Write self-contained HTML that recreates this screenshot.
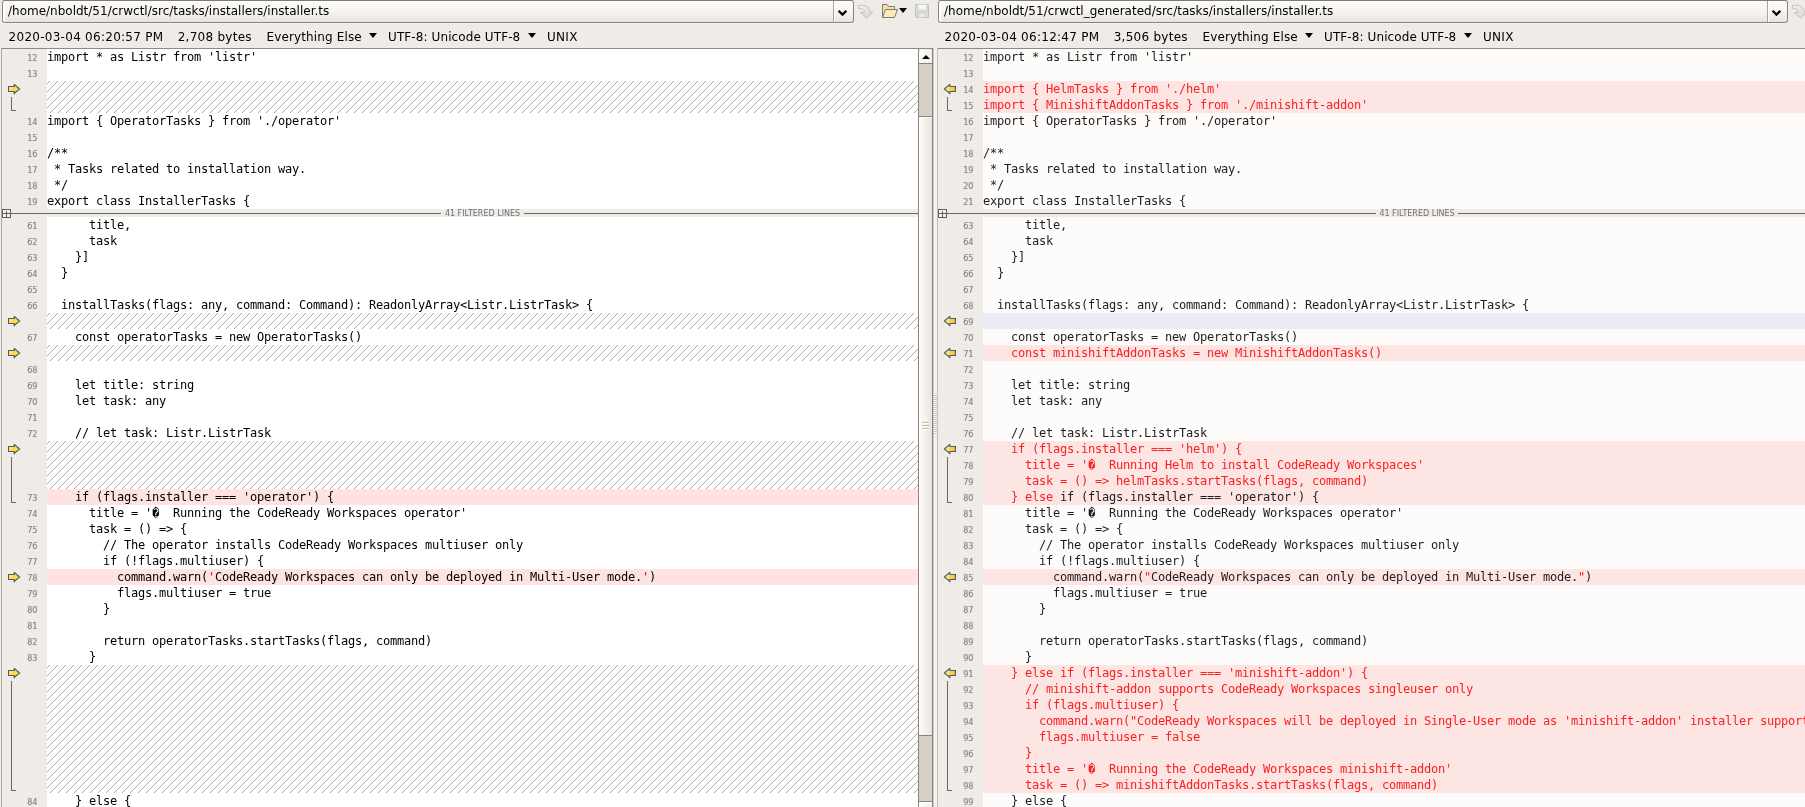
<!DOCTYPE html>
<html lang="en"><head><meta charset="utf-8"><title>installer.ts - Text Compare</title>
<style>
*{box-sizing:border-box;margin:0;padding:0}
html,body{width:1805px;height:807px;overflow:hidden;background:#efebe7}
body{font-family:"DejaVu Sans","Liberation Sans",sans-serif;font-size:12px;color:#000;position:relative}
#app{will-change:transform;position:absolute;left:0;top:0;width:1805px;height:807px;overflow:hidden;background:#efebe7}
.cb{position:absolute;top:0;height:23px;border:1px solid #8d857b;border-top-color:#7f7972;border-radius:3px;background:linear-gradient(#fcfbfa 0%,#f7f5f2 45%,#efece8 80%,#e6e2dd 100%);box-shadow:inset 1px 1px 0 #fff,inset 2px 0 0 #fff,0 1px 0 #f6f4f1}
.cb .tx{position:absolute;left:5px;top:2px;line-height:16px;white-space:nowrap;font-size:12px}
.cb .btn{position:absolute;right:0;top:0;bottom:0;width:20px;border-left:1px solid #a9a39b;box-shadow:inset 1px 0 0 #fff}
.cb .btn svg{position:absolute;left:3px;top:8px}
.info{position:absolute;top:25px;height:24px;line-height:24px;white-space:nowrap;font-size:12px}
.info span{position:absolute;top:0}
.tri{position:absolute;width:0;height:0;border-left:4.5px solid transparent;border-right:4.5px solid transparent;border-top:5px solid #000}
.pane{position:absolute;top:48px;height:759px;overflow:hidden}
.gut{position:absolute;left:0;top:0;bottom:0;background:#efebe7}
.r{position:absolute;left:0;right:0;height:16px;line-height:16px;white-space:pre}
.r .n{position:absolute;left:0;top:1px;text-align:right;font-family:"DejaVu Sans Condensed","DejaVu Sans",sans-serif;font-size:9px;color:#888;-webkit-text-stroke:0.18px #888;line-height:16px;padding-right:0}
.r code{position:absolute;top:0;height:16px;right:0;font-family:"DejaVu Sans Mono","Liberation Mono",monospace;font-size:12px;letter-spacing:-0.2246px;line-height:16px;white-space:pre;color:#000;overflow:hidden}
.r.p code{background:#ffe3e3}
.r.b code{background:#e8e8f8}
.r .r,.r span.r{color:#ff0000}
code span.r{position:static;color:#f00}
.fb{position:absolute;left:0;right:0;height:8px;background:#efebe7}
.fb .ln{position:absolute;left:2px;right:0;top:4px;height:1px;background:#6a6a6a}
.fb .pl{position:absolute;left:0;top:0;width:9px;height:9px;border:1px solid #5f5f5f;background:#f3f2f0;z-index:2}
.fb .pl:before{content:"";position:absolute;left:3px;top:1px;width:1px;height:6px;background:#5f5f5f}
.fb .pl:after{content:"";position:absolute;left:0;top:3px;width:7px;height:1px;background:#5f5f5f}
.fb .ft{position:absolute;top:0;height:8px;line-height:10.4px;overflow:hidden;text-align:center;font-size:8px;color:#727272}
.fb .ft b{font-weight:normal;background:#efebe7;padding:0 3.5px;position:relative;display:inline-block;height:8px;vertical-align:top}
.ar{position:absolute}
.bk{position:absolute;width:5px;border-left:1px solid #686868;border-bottom:1px solid #686868}

/* left pane */
#lp{left:1px;width:932px;border-left:1px solid #adaaa6;border-top:1px solid #8f8a83}
#lp .gut{width:45px}
#lp .r .n{width:35.5px}
#lp .r code{left:45px;right:15px}
#lp .fb .ft{left:45px;right:15px}
#lp .ar{left:6px}
#lp .bk{left:9px}
#lhatch{position:absolute;left:45px;top:0}
/* right pane */
#rp{left:937px;width:868px;border-left:1px solid #c2c0bd;border-top:1px solid #8f8a83}
#rp .gut{left:1px;width:44px;}
#rp .r .n{width:34.5px;left:1px}
#rp .r code{left:45px;right:0}
#rp .r code{background:#fdfcfb;color:#1f1e1e}
#rp .r.p code{background:#fde5e4}
#rp .r.b code{background:#ececf9}
#rp code span.r{color:#fd2020}
#rp .fb .ft{left:45px;width:868px}
#rp .ar{left:5px}
#rp .bk{left:9px}
#rp .code-bg{position:absolute;left:45px;top:0;right:0;bottom:0;background:#fdfcfb}
</style></head>
<body>
<div id="app">
<svg width="0" height="0" style="position:absolute">
<defs>
<pattern id="hp" width="8" height="8" patternUnits="userSpaceOnUse" x="3" y="0">
<g fill="#a8a8a8" shape-rendering="crispEdges">
<rect x="0" y="7" width="1" height="1"/><rect x="1" y="6" width="1" height="1"/><rect x="2" y="5" width="1" height="1"/><rect x="3" y="4" width="1" height="1"/><rect x="4" y="3" width="1" height="1"/><rect x="5" y="2" width="1" height="1"/><rect x="6" y="1" width="1" height="1"/><rect x="7" y="0" width="1" height="1"/>
</g>
</pattern>
<linearGradient id="ag" x1="0" y1="0" x2="1" y2="0.35"><stop offset="0" stop-color="#fff57e"/><stop offset="0.6" stop-color="#f7d558"/><stop offset="1" stop-color="#ffd43c"/></linearGradient>
<linearGradient id="gg" x1="0" y1="0" x2="1" y2="1"><stop offset="0" stop-color="#f2f2f2"/><stop offset="1" stop-color="#d6d6d6"/></linearGradient>
<linearGradient id="ag2" x1="0" y1="0" x2="1" y2="0.35"><stop offset="0" stop-color="#fff9a8"/><stop offset="0.5" stop-color="#f9dc68"/><stop offset="1" stop-color="#efc13c"/></linearGradient>
</defs>
</svg>

<!-- left path bar -->
<div class="cb" style="left:2px;width:852px"><span class="tx">/home/nboldt/51/crwctl/src/tasks/installers/installer.ts</span><span class="btn"><svg width="11" height="8" viewBox="0 0 11 8"><polygon points="0.8,2.6 2.5,0.9 5.5,3.9 8.5,0.9 10.2,2.6 5.5,7.3" fill="#000"/></svg></span></div>

<!-- toolbar icons -->
<svg style="position:absolute;left:857px;top:4px" width="18" height="16" viewBox="0 0 18 16"><path d="M1.5 1.5C7 0.6 13 2 13.5 8.5H15.8L9.5 13.8L3.2 8.5H7.5C7.5 5.6 5 4.2 1.5 4.5Z" fill="url(#gg)" stroke="#c2c2c2" stroke-width="1" stroke-linejoin="round"/></svg>
<svg style="position:absolute;left:881px;top:3px" width="18" height="16" viewBox="0 0 18 16"><path d="M1.5 14.5V1.5H6L7.5 3.5H13.5V6.5" fill="#f7dfa0" stroke="#7b7b7b" stroke-width="1" stroke-linejoin="round"/><path d="M1.5 14.5L4.5 6.5H16.5L13.5 14.5Z" fill="#fce9b6" stroke="#7b7b7b" stroke-width="1" stroke-linejoin="round"/></svg>
<i class="tri" style="left:898.7px;top:8px;border-left-width:4.9px;border-right-width:4.9px;border-top-width:5.3px"></i>
<svg style="position:absolute;left:914px;top:3px" width="16" height="16" viewBox="0 0 16 16"><path d="M1.5 1.5H14.5V14.5H2.5L1.5 13.5Z" fill="#d9d9d9" stroke="#c3c3c3" stroke-width="1"/><rect x="4" y="1.5" width="8.5" height="5.5" fill="#f6f6f6" stroke="#cdcdcd" stroke-width="0.6"/><rect x="4.5" y="10" width="7" height="4.5" fill="#e8e8e8" stroke="#c6c6c6" stroke-width="0.6"/></svg>
<svg style="position:absolute;left:1791px;top:4px" width="18" height="16" viewBox="0 0 18 16"><path d="M1.5 1.5C7 0.6 13 2 13.5 8.5H15.8L9.5 13.8L3.2 8.5H7.5C7.5 5.6 5 4.2 1.5 4.5Z" fill="url(#gg)" stroke="#c2c2c2" stroke-width="1" stroke-linejoin="round"/></svg>

<!-- right path bar -->
<div class="cb" style="left:938px;width:850px"><span class="tx">/home/nboldt/51/crwctl_generated/src/tasks/installers/installer.ts</span><span class="btn"><svg width="11" height="8" viewBox="0 0 11 8"><polygon points="0.8,2.6 2.5,0.9 5.5,3.9 8.5,0.9 10.2,2.6 5.5,7.3" fill="#000"/></svg></span></div>

<!-- info rows -->
<div class="info" style="left:0px;width:936px">
<span style="left:8.6px;letter-spacing:0.27px">2020-03-04 06:20:57 PM</span><span style="left:177.7px;letter-spacing:0.27px">2,708 bytes</span><span style="left:266.5px;letter-spacing:0.13px">Everything Else</span><i class="tri" style="left:369px;top:8px"></i><span style="left:388px;letter-spacing:0.1px">UTF-8: Unicode UTF-8</span><i class="tri" style="left:528px;top:8px"></i><span style="left:547px;letter-spacing:0.3px">UNIX</span>
</div>
<div class="info" style="left:936px;width:869px">
<span style="left:8.6px;letter-spacing:0.27px">2020-03-04 06:12:47 PM</span><span style="left:177.7px;letter-spacing:0.27px">3,506 bytes</span><span style="left:266.5px;letter-spacing:0.13px">Everything Else</span><i class="tri" style="left:369px;top:8px"></i><span style="left:388px;letter-spacing:0.1px">UTF-8: Unicode UTF-8</span><i class="tri" style="left:528px;top:8px"></i><span style="left:547px;letter-spacing:0.3px">UNIX</span>
</div>

<!-- left pane -->
<div class="pane" id="lp">
<div class="gut"></div>
<div style="position:absolute;left:45px;top:0;bottom:0;width:871px;background:#fff"></div>
<svg id="lhatch" width="871" height="759" viewBox="0 0 871 759"><rect x="0" y="32" width="871" height="32" fill="url(#hp)"/><rect x="0" y="264" width="871" height="16" fill="url(#hp)"/><rect x="0" y="296" width="871" height="16" fill="url(#hp)"/><rect x="0" y="392" width="871" height="48" fill="url(#hp)"/><rect x="0" y="616" width="871" height="128" fill="url(#hp)"/></svg>
<div class="r" style="top:0px"><span class="n">12</span><code>import * as Listr from 'listr'</code></div>
<div class="r" style="top:16px"><span class="n">13</span><code></code></div>
<div class="r" style="top:64px"><span class="n">14</span><code>import { OperatorTasks } from './operator'</code></div>
<div class="r" style="top:80px"><span class="n">15</span><code></code></div>
<div class="r" style="top:96px"><span class="n">16</span><code>/**</code></div>
<div class="r" style="top:112px"><span class="n">17</span><code> * Tasks related to installation way.</code></div>
<div class="r" style="top:128px"><span class="n">18</span><code> */</code></div>
<div class="r" style="top:144px"><span class="n">19</span><code>export class InstallerTasks {</code></div>
<div class="fb" style="top:160px"><i class="pl"></i><i class="ln"></i><span class="ft"><b>41 FILTERED LINES</b></span></div>
<div class="r" style="top:168px"><span class="n">61</span><code>      title,</code></div>
<div class="r" style="top:184px"><span class="n">62</span><code>      task</code></div>
<div class="r" style="top:200px"><span class="n">63</span><code>    }]</code></div>
<div class="r" style="top:216px"><span class="n">64</span><code>  }</code></div>
<div class="r" style="top:232px"><span class="n">65</span><code></code></div>
<div class="r" style="top:248px"><span class="n">66</span><code>  installTasks(flags: any, command: Command): ReadonlyArray&lt;Listr.ListrTask&gt; {</code></div>
<div class="r" style="top:280px"><span class="n">67</span><code>    const operatorTasks = new OperatorTasks()</code></div>
<div class="r" style="top:312px"><span class="n">68</span><code></code></div>
<div class="r" style="top:328px"><span class="n">69</span><code>    let title: string</code></div>
<div class="r" style="top:344px"><span class="n">70</span><code>    let task: any</code></div>
<div class="r" style="top:360px"><span class="n">71</span><code></code></div>
<div class="r" style="top:376px"><span class="n">72</span><code>    // let task: Listr.ListrTask</code></div>
<div class="r p" style="top:440px"><span class="n">73</span><code>    if (flags.installer === 'operator') {</code></div>
<div class="r" style="top:456px"><span class="n">74</span><code>      title = '�  Running the CodeReady Workspaces operator'</code></div>
<div class="r" style="top:472px"><span class="n">75</span><code>      task = () =&gt; {</code></div>
<div class="r" style="top:488px"><span class="n">76</span><code>        // The operator installs CodeReady Workspaces multiuser only</code></div>
<div class="r" style="top:504px"><span class="n">77</span><code>        if (!flags.multiuser) {</code></div>
<div class="r p" style="top:520px"><span class="n">78</span><code>          command.warn(<span class="r">'</span>CodeReady Workspaces can only be deployed in Multi-User mode.<span class="r">'</span>)</code></div>
<div class="r" style="top:536px"><span class="n">79</span><code>          flags.multiuser = true</code></div>
<div class="r" style="top:552px"><span class="n">80</span><code>        }</code></div>
<div class="r" style="top:568px"><span class="n">81</span><code></code></div>
<div class="r" style="top:584px"><span class="n">82</span><code>        return operatorTasks.startTasks(flags, command)</code></div>
<div class="r" style="top:600px"><span class="n">83</span><code>      }</code></div>
<div class="r" style="top:744px"><span class="n">84</span><code>    } else {</code></div>
<svg class="ar" style="top:35px" width="13" height="11" viewBox="0 0 13 11"><path d="M0.5 2.5H6.2V0.4L11.6 5L6.2 9.6V7.5H0.5Z" fill="url(#ag)" stroke="#54575f" stroke-width="1.1" stroke-linejoin="miter"/></svg>
<i class="bk" style="top:48px;height:14px"></i>
<svg class="ar" style="top:267px" width="13" height="11" viewBox="0 0 13 11"><path d="M0.5 2.5H6.2V0.4L11.6 5L6.2 9.6V7.5H0.5Z" fill="url(#ag)" stroke="#54575f" stroke-width="1.1" stroke-linejoin="miter"/></svg>
<svg class="ar" style="top:299px" width="13" height="11" viewBox="0 0 13 11"><path d="M0.5 2.5H6.2V0.4L11.6 5L6.2 9.6V7.5H0.5Z" fill="url(#ag)" stroke="#54575f" stroke-width="1.1" stroke-linejoin="miter"/></svg>
<svg class="ar" style="top:395px" width="13" height="11" viewBox="0 0 13 11"><path d="M0.5 2.5H6.2V0.4L11.6 5L6.2 9.6V7.5H0.5Z" fill="url(#ag)" stroke="#54575f" stroke-width="1.1" stroke-linejoin="miter"/></svg>
<i class="bk" style="top:408px;height:46px"></i>
<svg class="ar" style="top:523px" width="13" height="11" viewBox="0 0 13 11"><path d="M0.5 2.5H6.2V0.4L11.6 5L6.2 9.6V7.5H0.5Z" fill="url(#ag)" stroke="#54575f" stroke-width="1.1" stroke-linejoin="miter"/></svg>
<svg class="ar" style="top:619px" width="13" height="11" viewBox="0 0 13 11"><path d="M0.5 2.5H6.2V0.4L11.6 5L6.2 9.6V7.5H0.5Z" fill="url(#ag)" stroke="#54575f" stroke-width="1.1" stroke-linejoin="miter"/></svg>
<i class="bk" style="top:632px;height:110px"></i>

<!-- vertical scrollbar -->
<div style="position:absolute;left:916px;top:0;width:15px;height:759px;background:#d6cfc6;border-left:1px solid #8d857b;border-right:1px solid #8d857b">
<div style="position:absolute;left:0;top:0;width:13px;height:15px;background:linear-gradient(90deg,#fff,#f1eeea);border-bottom:1px solid #8d857b;border-radius:3px 3px 0 0"><i class="tri" style="left:2.6px;top:5.5px;border-left-width:4px;border-right-width:4px;border-top:0;border-bottom:4.5px solid #000"></i></div>
<div style="position:absolute;left:0;top:67px;width:13px;height:620px;background:linear-gradient(90deg,#fdfcfb,#f4f1ed 50%,#e7e3de);border-top:1px solid #8d857b;border-bottom:1px solid #8d857b;box-shadow:inset 1px 1px 0 #fff">
<i style="position:absolute;left:3px;top:305px;width:7px;height:1px;background:#c3bab0;box-shadow:0 3px 0 #c3bab0,0 6px 0 #c3bab0,0 1px 0 #fff,0 4px 0 #fff,0 7px 0 #fff"></i>
</div>
<div style="position:absolute;left:0;top:752px;width:13px;height:15px;background:linear-gradient(90deg,#fff,#f1eeea);border-top:1px solid #8d857b;box-shadow:inset 0 1px 0 #fff"></div>
</div>

</div>


<div style="position:absolute;left:933px;top:48px;width:1px;height:759px;background:#cdc9c4"></div>
<div style="position:absolute;left:934px;top:48px;width:3px;height:759px;background:#f4f1ee"></div>
<div style="position:absolute;left:934px;top:395px;width:3px;height:40px;background:repeating-linear-gradient(#c6c3bf 0,#c6c3bf 1px,#fff 1px,#fff 2px)"></div>


<!-- right pane -->
<div class="pane" id="rp">
<div class="gut"></div>
<div class="code-bg"></div>
<div class="r" style="top:0px"><span class="n">12</span><code>import * as Listr from 'listr'</code></div>
<div class="r" style="top:16px"><span class="n">13</span><code></code></div>
<div class="r p" style="top:32px"><span class="n">14</span><code><span class="r">import { HelmTasks } from './helm'</span></code></div>
<div class="r p" style="top:48px"><span class="n">15</span><code><span class="r">import { MinishiftAddonTasks } from './minishift-addon'</span></code></div>
<div class="r" style="top:64px"><span class="n">16</span><code>import { OperatorTasks } from './operator'</code></div>
<div class="r" style="top:80px"><span class="n">17</span><code></code></div>
<div class="r" style="top:96px"><span class="n">18</span><code>/**</code></div>
<div class="r" style="top:112px"><span class="n">19</span><code> * Tasks related to installation way.</code></div>
<div class="r" style="top:128px"><span class="n">20</span><code> */</code></div>
<div class="r" style="top:144px"><span class="n">21</span><code>export class InstallerTasks {</code></div>
<div class="fb" style="top:160px"><i class="pl"></i><i class="ln"></i><span class="ft"><b>41 FILTERED LINES</b></span></div>
<div class="r" style="top:168px"><span class="n">63</span><code>      title,</code></div>
<div class="r" style="top:184px"><span class="n">64</span><code>      task</code></div>
<div class="r" style="top:200px"><span class="n">65</span><code>    }]</code></div>
<div class="r" style="top:216px"><span class="n">66</span><code>  }</code></div>
<div class="r" style="top:232px"><span class="n">67</span><code></code></div>
<div class="r" style="top:248px"><span class="n">68</span><code>  installTasks(flags: any, command: Command): ReadonlyArray&lt;Listr.ListrTask&gt; {</code></div>
<div class="r b" style="top:264px"><span class="n">69</span><code></code></div>
<div class="r" style="top:280px"><span class="n">70</span><code>    const operatorTasks = new OperatorTasks()</code></div>
<div class="r p" style="top:296px"><span class="n">71</span><code><span class="r">    const minishiftAddonTasks = new MinishiftAddonTasks()</span></code></div>
<div class="r" style="top:312px"><span class="n">72</span><code></code></div>
<div class="r" style="top:328px"><span class="n">73</span><code>    let title: string</code></div>
<div class="r" style="top:344px"><span class="n">74</span><code>    let task: any</code></div>
<div class="r" style="top:360px"><span class="n">75</span><code></code></div>
<div class="r" style="top:376px"><span class="n">76</span><code>    // let task: Listr.ListrTask</code></div>
<div class="r p" style="top:392px"><span class="n">77</span><code><span class="r">    if (flags.installer === 'helm') {</span></code></div>
<div class="r p" style="top:408px"><span class="n">78</span><code><span class="r">      title = '�  Running Helm to install CodeReady Workspaces'</span></code></div>
<div class="r p" style="top:424px"><span class="n">79</span><code><span class="r">      task = () =&gt; helmTasks.startTasks(flags, command)</span></code></div>
<div class="r p" style="top:440px"><span class="n">80</span><code><span class="r">    } else </span>if (flags.installer === 'operator') {</code></div>
<div class="r" style="top:456px"><span class="n">81</span><code>      title = '�  Running the CodeReady Workspaces operator'</code></div>
<div class="r" style="top:472px"><span class="n">82</span><code>      task = () =&gt; {</code></div>
<div class="r" style="top:488px"><span class="n">83</span><code>        // The operator installs CodeReady Workspaces multiuser only</code></div>
<div class="r" style="top:504px"><span class="n">84</span><code>        if (!flags.multiuser) {</code></div>
<div class="r p" style="top:520px"><span class="n">85</span><code>          command.warn(<span class="r">"</span>CodeReady Workspaces can only be deployed in Multi-User mode.<span class="r">"</span>)</code></div>
<div class="r" style="top:536px"><span class="n">86</span><code>          flags.multiuser = true</code></div>
<div class="r" style="top:552px"><span class="n">87</span><code>        }</code></div>
<div class="r" style="top:568px"><span class="n">88</span><code></code></div>
<div class="r" style="top:584px"><span class="n">89</span><code>        return operatorTasks.startTasks(flags, command)</code></div>
<div class="r" style="top:600px"><span class="n">90</span><code>      }</code></div>
<div class="r p" style="top:616px"><span class="n">91</span><code><span class="r">    } else if (flags.installer === 'minishift-addon') {</span></code></div>
<div class="r p" style="top:632px"><span class="n">92</span><code><span class="r">      // minishift-addon supports CodeReady Workspaces singleuser only</span></code></div>
<div class="r p" style="top:648px"><span class="n">93</span><code><span class="r">      if (flags.multiuser) {</span></code></div>
<div class="r p" style="top:664px"><span class="n">94</span><code><span class="r">        command.warn("CodeReady Workspaces will be deployed in Single-User mode as 'minishift-addon' installer supports only that mode.")</span></code></div>
<div class="r p" style="top:680px"><span class="n">95</span><code><span class="r">        flags.multiuser = false</span></code></div>
<div class="r p" style="top:696px"><span class="n">96</span><code><span class="r">      }</span></code></div>
<div class="r p" style="top:712px"><span class="n">97</span><code><span class="r">      title = '�  Running the CodeReady Workspaces minishift-addon'</span></code></div>
<div class="r p" style="top:728px"><span class="n">98</span><code><span class="r">      task = () =&gt; minishiftAddonTasks.startTasks(flags, command)</span></code></div>
<div class="r" style="top:744px"><span class="n">99</span><code>    } else {</code></div>
<svg class="ar" style="top:35px" width="13" height="11" viewBox="0 0 13 11"><path d="M12.5 2.5H6.8V0.4L1.4 5L6.8 9.6V7.5H12.5Z" fill="url(#ag2)" stroke="#54575f" stroke-width="1.1" stroke-linejoin="miter"/></svg>
<i class="bk" style="top:48px;height:14px"></i>
<svg class="ar" style="top:267px" width="13" height="11" viewBox="0 0 13 11"><path d="M12.5 2.5H6.8V0.4L1.4 5L6.8 9.6V7.5H12.5Z" fill="url(#ag2)" stroke="#54575f" stroke-width="1.1" stroke-linejoin="miter"/></svg>
<svg class="ar" style="top:299px" width="13" height="11" viewBox="0 0 13 11"><path d="M12.5 2.5H6.8V0.4L1.4 5L6.8 9.6V7.5H12.5Z" fill="url(#ag2)" stroke="#54575f" stroke-width="1.1" stroke-linejoin="miter"/></svg>
<svg class="ar" style="top:395px" width="13" height="11" viewBox="0 0 13 11"><path d="M12.5 2.5H6.8V0.4L1.4 5L6.8 9.6V7.5H12.5Z" fill="url(#ag2)" stroke="#54575f" stroke-width="1.1" stroke-linejoin="miter"/></svg>
<i class="bk" style="top:408px;height:46px"></i>
<svg class="ar" style="top:523px" width="13" height="11" viewBox="0 0 13 11"><path d="M12.5 2.5H6.8V0.4L1.4 5L6.8 9.6V7.5H12.5Z" fill="url(#ag2)" stroke="#54575f" stroke-width="1.1" stroke-linejoin="miter"/></svg>
<svg class="ar" style="top:619px" width="13" height="11" viewBox="0 0 13 11"><path d="M12.5 2.5H6.8V0.4L1.4 5L6.8 9.6V7.5H12.5Z" fill="url(#ag2)" stroke="#54575f" stroke-width="1.1" stroke-linejoin="miter"/></svg>
<i class="bk" style="top:632px;height:110px"></i>
</div>

</div>
</body></html>
